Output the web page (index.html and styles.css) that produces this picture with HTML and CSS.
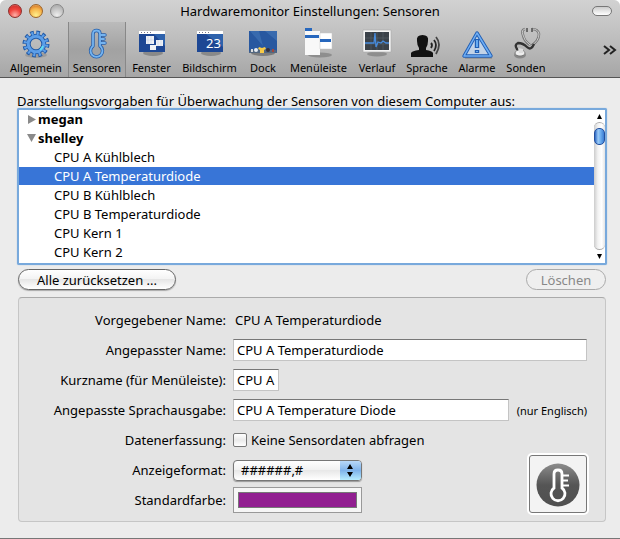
FILE: index.html
```html
<!DOCTYPE html>
<html lang="de">
<head>
<meta charset="utf-8">
<title>Hardwaremonitor Einstellungen: Sensoren</title>
<link rel="stylesheet" href="styles.css">
</head>
<body>
<div class="window">
  <header class="chrome">
    <div class="titlebar">
      <div class="lights">
        <button class="light red" aria-label="Schließen"></button>
        <button class="light yellow" aria-label="Minimieren"></button>
        <button class="light grey" aria-label="Zoomen"></button>
      </div>
      <h1>Hardwaremonitor Einstellungen: Sensoren</h1>
      <button class="pill" aria-label="Symbolleiste"></button>
    </div>
    <nav class="toolbar">
      <button class="tool">
        <svg width="32" height="32" viewBox="0 0 32 32">
          <ellipse cx="16" cy="28" rx="11" ry="3" fill="#777" opacity=".4"/>
          <g fill="none" stroke="#245ca8">
            <circle cx="16" cy="17" r="11" stroke-width="5" stroke-dasharray="3.400 2.360"/>
            <circle cx="16" cy="17" r="7.800" stroke-width="5"/>
          </g>
          <g fill="none" stroke="#5c9ee8">
            <circle cx="16" cy="17" r="10.700" stroke-width="3.400" stroke-dasharray="2 3.602" stroke-dashoffset="-.65"/>
            <circle cx="16" cy="17" r="7.800" stroke-width="3"/>
          </g>
          <path d="M20 23a8 8 0 0 0 3-4" stroke="#5ce0f4" stroke-width="2" fill="none"/>
        </svg>
        <span>Allgemein</span>
      </button>
      <button class="tool selected">
        <svg width="32" height="32" viewBox="0 0 32 32">
          <g fill="none" stroke-linecap="round" stroke-linejoin="round">
            <g stroke="#275fa9" stroke-width="3.400">
              <path d="M12 19V7q0-3.500 3.500-3.500T19 7v12a6 6 0 1 1-7 0z"/>
              <path d="M20 8h4M20 12h3M20 16h4"/>
            </g>
            <g stroke="#75b4f0" stroke-width="1.800">
              <path d="M12 19V7q0-3.500 3.500-3.500T19 7v12a6 6 0 1 1-7 0z"/>
              <path d="M20 8h4M20 12h3M20 16h4"/>
            </g>
          </g>
        </svg>
        <span>Sensoren</span>
      </button>
      <button class="tool">
        <svg width="32" height="32" viewBox="0 0 32 32">
          <ellipse cx="17" cy="26" rx="10" ry="3" fill="#555" opacity=".45"/>
          <path fill="#1d4794" d="M3 4h26v21H3z"/><path fill="#2e62ac" d="M18 7h11v12z"/>
          <path fill="#fff" d="M3 4h26v3H3z"/>
          <path d="M5 5.500h12" stroke="#778" stroke-dasharray="1 2"/>
          <path fill="#eef1f6" d="M10 9h8v8h-8zM20 13h7v6h-7zM14 18h6v5h-6z"/>
          <path d="M12 9v8M15 9v8M10 13h8M22 13v6M25 13v6" stroke="#cbd5e8" stroke-width=".6"/>
        </svg>
        <span>Fenster</span>
      </button>
      <button class="tool">
        <svg width="32" height="32" viewBox="0 0 32 32">
          <ellipse cx="17" cy="26" rx="10" ry="3" fill="#555" opacity=".45"/>
          <path fill="#1d4794" d="M3 4h26v21H3z"/><path fill="#2e62ac" d="M12 7h17v13z"/>
          <path fill="#fff" d="M3 4h26v3H3z"/>
          <path d="M5 5.500h12" stroke="#778" stroke-dasharray="1 2"/>
          <text x="12" y="21" class="num">23</text>
        </svg>
        <span>Bildschirm</span>
      </button>
      <button class="tool">
        <svg width="32" height="32" viewBox="0 0 32 32">
          <ellipse cx="16" cy="26" rx="12" ry="3" fill="#444" opacity=".5"/>
          <path fill="#2858a0" d="M2 4h28v22H2z"/>
          <path fill="#4377b8" d="M3 4l13 15L12 4zM18 4l12 10V4z" opacity=".6"/>
          <path fill="#536780" d="M3 23h26l1 3H2z"/>
          <circle cx="9" cy="23" r="2" fill="#e8eef4"/>
          <path fill="#f8ca46" d="M12 20l3 1 3-1 1 2-2 1v3h-4v-3l-2-1z"/>
          <circle cx="21" cy="23" r="2" fill="#35313c"/><path fill="#ddd" d="M4 22h2v3H4z"/><path fill="#a5443a" d="M25 22h2v3h-2z"/>
        </svg>
        <span>Dock</span>
      </button>
      <button class="tool">
        <svg width="32" height="32" viewBox="0 0 32 32">
          <ellipse cx="17" cy="28" rx="12" ry="2.500" fill="#555" opacity=".4"/>
          <path fill="#2767bd" d="M2 1h7v3H2z"/>
          <path fill="#f8f8f8" d="M2 4h15v24H2z"/><path fill="#2767bd" d="M2 8h14v3H2z"/>
          <path fill="#fff" stroke="#c5c5c5" stroke-width=".5" d="M17 6h12v16H17z"/>
          <path fill="#2767bd" d="M17 12h11v3H17z"/>
        </svg>
        <span>Menüleiste</span>
      </button>
      <button class="tool">
        <svg width="32" height="32" viewBox="0 0 32 32">
          <ellipse cx="16" cy="27" rx="10" ry="2.500" fill="#555" opacity=".4"/>
          <path fill="#f4f4f4" stroke="#aaa" stroke-width=".6" d="M2 3h28v22H2z"/>
          <path fill="#3a4149" d="M4 5h24v18H4z"/>
          <path d="M10 5v18M16 5v18M22 5v18M4 11h24M4 17h24" stroke="#59616a" stroke-width=".6"/>
          <path d="M4 16h9l1-10 1 14 2-5 3 1 2-2 3 2h3" stroke="#478bdc" stroke-width="1.300" fill="none"/>
        </svg>
        <span>Verlauf</span>
      </button>
      <button class="tool">
        <svg width="32" height="32" viewBox="0 0 32 32">
          <path fill="#111" d="M6 14q-1-6 5.500-6t5.500 6q0 4-2 7v2q6 1 7 3v4H0v-4q1-2 8-3v-2q-2-3-2-7z"/>
          <g fill="none" stroke="#222" stroke-width="1.800"><path d="M20 16q2 2 0 5M23 13q4 5 0 11"/><path d="M25 10q6 7 0 17" stroke="#444"/></g>
        </svg>
        <span>Sprache</span>
      </button>
      <button class="tool">
        <svg width="32" height="32" viewBox="0 0 32 32">
          <path d="M4 31h27" stroke="#999" stroke-width="2"/>
          <g stroke-linejoin="round" fill="none">
            <path fill="#c2d3e7" d="M16 6L3 29h27z" stroke="#215eb4" stroke-width="3.400"/>
            <path d="M16 6L3 29h27z" stroke="#70aff4" stroke-width="1.500"/>
            <path d="M16 12v9M16 23v3" stroke="#215eb4" stroke-width="4.400"/>
            <path d="M16 13v7M16 24v1" stroke="#65abf2" stroke-width="2"/>
          </g>
        </svg>
        <span>Alarme</span>
      </button>
      <button class="tool">
        <svg width="32" height="32" viewBox="0 0 32 32">
          <g fill="none">
            <path d="M15 2q-4 1-2 6 1 6 7 10M22 2q6 0 7 5 0 7-8 12" stroke="#777" stroke-width="2.600"/>
            <path d="M15 2q-4 1-2 6 1 6 7 10M22 2q6 0 7 5 0 7-8 12" stroke="#ccc" stroke-width="1"/>
            <path d="M24 17q-3 7-7 3t-9-4q-4 2-1 6l4 2" stroke="#333" stroke-width="2.400"/>
            <path d="M17 1v4M22 1v4" stroke="#555" stroke-width="1.600"/>
          </g>
          <ellipse cx="10" cy="28" rx="6" ry="3.500" fill="#888"/><ellipse cx="10" cy="26" rx="5" ry="3" fill="#eee" stroke="#666" stroke-width=".7"/><path d="M8 21l5 1v4H9z" fill="#ddd"/>
        </svg>
        <span>Sonden</span>
      </button>
      <button class="more" aria-label="Weitere">
        <svg width="14" height="10" viewBox="0 0 14 10"><path d="M1 1l5 4-5 4M7 1l5 4-5 4" fill="none" stroke="#222" stroke-width="2"/></svg>
      </button>
    </nav>
  </header>

  <main>
    <h2>Darstellungsvorgaben für Überwachung der Sensoren von diesem Computer aus:</h2>
    <div class="listbox">
      <ul class="rows">
        <li class="group"><svg width="9" height="9" viewBox="0 0 9 9"><path fill="#8a8a8a" d="M1 0l8 4.500L1 9z"/></svg>megan</li>
        <li class="group"><svg width="9" height="9" viewBox="0 0 9 9"><path fill="#8a8a8a" d="M0 0h9L4.500 8z"/></svg>shelley</li>
        <li>CPU A Kühlblech</li>
        <li class="current">CPU A Temperaturdiode</li>
        <li>CPU B Kühlblech</li>
        <li>CPU B Temperaturdiode</li>
        <li>CPU Kern 1</li>
        <li>CPU Kern 2</li>
      </ul>
      <div class="scrollbar">
        <svg width="11" height="12" viewBox="0 0 11 12"><path d="M3 9l2.500-5L8 9z"/></svg>
        <div class="track"><div class="thumb"></div></div>
        <svg width="11" height="13" viewBox="0 0 11 13"><path d="M3 4h5L5.500 9z"/></svg>
      </div>
    </div>
    <div class="actions">
      <button class="push reset">Alle zurücksetzen ...</button>
      <button class="push delete" disabled>Löschen</button>
    </div>
    <form class="panel">
      <span class="label">Vorgegebener Name:</span>
      <div class="field"><span class="value">CPU A Temperaturdiode</span></div>
      <label for="name">Angepasster Name:</label>
      <div class="field"><input class="text" id="name" type="text" value="CPU A Temperaturdiode"></div>
      <label for="short">Kurzname (für Menüleiste):</label>
      <div class="field"><input class="text short" id="short" type="text" value="CPU A"></div>
      <label for="speech">Angepasste Sprachausgabe:</label>
      <div class="field"><input class="text" id="speech" type="text" value="CPU A Temperature Diode"><span class="hint">(nur Englisch)</span></div>
      <span class="label">Datenerfassung:</span>
      <div class="field"><input class="check" id="skip" type="checkbox"><label for="skip">Keine Sensordaten abfragen</label></div>
      <label for="format">Anzeigeformat:</label>
      <div class="field">
        <div class="popup">
          <select id="format"><option>######,#</option></select>
          <svg width="21" height="19" viewBox="0 0 21 19"><path d="M7 8l3-5 3 5zM7 11h6l-3 5z"/></svg>
        </div>
      </div>
      <label for="color">Standardfarbe:</label>
      <div class="field"><input class="well" id="color" type="color" value="#921f91"></div>
      <button class="symbol" type="button" aria-label="Symbol">
        <svg width="46" height="46" viewBox="0 0 46 46">
          <defs><linearGradient id="disc" x1="0" y1="0" x2="0" y2="1"><stop offset="0" stop-color="#8c8c8c"/><stop offset=".5" stop-color="#555"/><stop offset="1" stop-color="#505050"/></linearGradient></defs>
          <circle cx="23" cy="24" r="21.500" fill="url(#disc)"/>
          <path d="M19 27V13q0-4 4-4t4 4v14a7 7 0 1 1-8 0z" fill="none" stroke="#fff" stroke-width="2.800"/>
          <path d="M27 14.500h7M27 19.500h6M27 24.500h7" stroke="#fff" stroke-width="2.200"/>
        </svg>
      </button>
    </form>
  </main>
</div>
</body>
</html>
```
FILE: styles.css
```css
* { box-sizing: border-box; }

body {
  margin: 0;
  background: #fff;
  color: #000;
  font: 13px/19px "Noto Sans", "Open Sans", sans-serif;
}

button, input, select { font: inherit; color: inherit; margin: 0; }

h1, h2 { margin: 0; font-size: 13px; font-weight: 400; }

.window {
  min-height: 100vh;
  background: #ececec;
  border-bottom: 1px solid #777;
  border-radius: 6px 6px 0 0;
  overflow: hidden;
}

.chrome {
  background: linear-gradient(#d2d2d2, #bebebe 50%, #a6a6a6);
  border-bottom: 1px solid #555;
}

.titlebar {
  display: grid;
  grid-template-columns: 1fr auto 1fr;
  align-items: center;
  height: 22px;
  padding: 0 8px;
}

.lights { display: flex; gap: 7px; }

.light {
  width: 14px;
  height: 14px;
  padding: 0;
  border: 1px solid #777;
  border-radius: 50%;
}

.red { border-color: #8c302d; background: radial-gradient(circle at 50% 85%, #ffb0a8, #f0443e 50%, #d83632 75%, #f2a09c); }
.yellow { border-color: #9c6428; background: radial-gradient(circle at 50% 85%, #fff08c, #f6b44a 55%, #e08c34 75%, #f6d4a0); }
.grey { border-color: #858585; background: radial-gradient(circle at 50% 85%, #eee, #c0c0c0 60%, #b0b0b0 80%, #ddd); }

.pill {
  justify-self: end;
  width: 20px;
  height: 10px;
  padding: 0;
  border: 1px solid #777;
  border-radius: 5px;
  background: linear-gradient(#ccc, #fff);
}

.toolbar {
  display: grid;
  grid-template-columns: 64px 58px 51px 65px 42px 69px 48px 52px 48px 50px 1fr;
  height: 55px;
  padding: 0 3px 0 4px;
}

.tool {
  display: flex;
  flex-direction: column;
  align-items: center;
  padding: 5px 0 0;
  border: 0;
  background: none;
  font-size: 11px;
  line-height: 18px;
  white-space: nowrap;
}

.tool svg { flex: none; }

.selected {
  background: linear-gradient(#bbb, #a2a2a2 50%, #aaa);
  box-shadow: inset 1px 0 #888, inset -1px 0 #888;
}

.num { font: 13px "Noto Sans", sans-serif; fill: #fff; }

.more {
  justify-self: end;
  align-self: center;
  display: flex;
  padding: 0;
  border: 0;
  background: none;
}

main { padding: 14px 14px 16px 17px; }

.listbox {
  display: flex;
  height: 157px;
  margin-top: -3px;
  margin-right: -1px;
  border: 2px solid #78a9dc;
  border-radius: 2px;
  box-shadow: 0 0 1px #78a9dc;
  background: #fff;
  overflow: hidden;
}

.rows {
  flex: 1;
  margin: 0;
  padding: 0;
  list-style: none;
}

.rows li { height: 19px; padding-left: 35px; }

.rows .group {
  display: flex;
  align-items: center;
  gap: 2px;
  padding-left: 8px;
  font-weight: 700;
}

.rows .current { background: #3875d7; background-clip: padding-box; border-bottom: 1px solid transparent; color: #fff; }

.scrollbar {
  display: flex;
  flex-direction: column;
  width: 11px;
  background: #fff;
}

.track {
  flex: 1;
  padding-top: 5px;
  border: solid #aaa;
  border-width: 1px 0;
  border-radius: 6px;
  background: linear-gradient(90deg, #ccc, #f2f2f2 35%, #fff 70%, #e4e4e4);
}

.thumb {
  height: 17px;
  border: 1px solid #234f9e;
  border-radius: 5px;
  background: linear-gradient(90deg, #2c68c4, #9ccaf6 35%, #6fb0f0 60%, #3b7cd2);
}

.actions {
  display: flex;
  justify-content: space-between;
  padding: 4px 0 7px 1px;
}

.push {
  height: 21px;
  padding: 0 13px;
  border: 1px solid #666;
  border-radius: 11px;
  background: linear-gradient(#fff, #f4f4f4 45%, #e6e6e6 50%, #fff);
  box-shadow: 0 1px 1px #aaa;
  line-height: 18px;
}

.reset { min-width: 158px; }
.delete { min-width: 80px; border-color: #aaa; background: #efefef; box-shadow: none; color: #888; }

.panel {
  position: relative;
  display: grid;
  grid-template-columns: 207px 1fr;
  grid-auto-rows: 30px;
  align-items: center;
  column-gap: 7px;
  margin-left: 1px;
  padding: 7px 18px 6px 0;
  border: 1px solid #c6c6c6;
  border-top-color: #aaa;
  border-radius: 4px;
  background: #e4e4e4;
}

.panel > label, .label { text-align: right; white-space: nowrap; }

.field { display: flex; align-items: center; min-width: 0; }

.value { padding-left: 2px; }

.text {
  flex: 1;
  min-width: 0;
  height: 22px;
  padding: 0 3px;
  border: 1px solid #c4c4c4;
  border-top-color: #777;
  background: #fff;
  outline: 0;
}

.short { flex: 0 0 46px; }

.hint { padding-left: 8px; font-size: 11px; white-space: nowrap; }

.check {
  appearance: none;
  width: 14px;
  height: 14px;
  margin-right: 4px;
  border: 1px solid #777;
  border-radius: 2px;
  background: linear-gradient(#fff, #eaeaea 50%, #fff);
}

.popup {
  display: flex;
  width: 129px;
  height: 21px;
  border: 1px solid #777;
  border-radius: 4px;
  background: linear-gradient(#fff, #f2f2f2 45%, #e8e8e8 50%, #fff);
  box-shadow: 0 1px 1px #999;
  overflow: hidden;
}

.popup select {
  flex: 1;
  min-width: 0;
  padding: 0 7px;
  border: 0;
  appearance: none;
  background: none;
  outline: 0;
}

.popup svg { flex: none; background: linear-gradient(#b8d8f8, #7fb3ea 50%, #b5ecff); }

.well {
  width: 129px;
  height: 26px;
  padding: 4px;
  border: 1px solid #999;
  background: #f6f6f6;
}

.well::-webkit-color-swatch-wrapper { padding: 0; }
.well::-webkit-color-swatch { border: 1px solid #777; border-radius: 0; }

.symbol {
  position: absolute;
  right: 16px;
  bottom: 6px;
  display: grid;
  place-items: center;
  width: 62px;
  height: 62px;
  padding: 0;
  border: 2px solid #fff;
  border-radius: 5px;
  background: #f3f3f3;
  box-shadow: inset 0 0 0 1px #777;
}
```
